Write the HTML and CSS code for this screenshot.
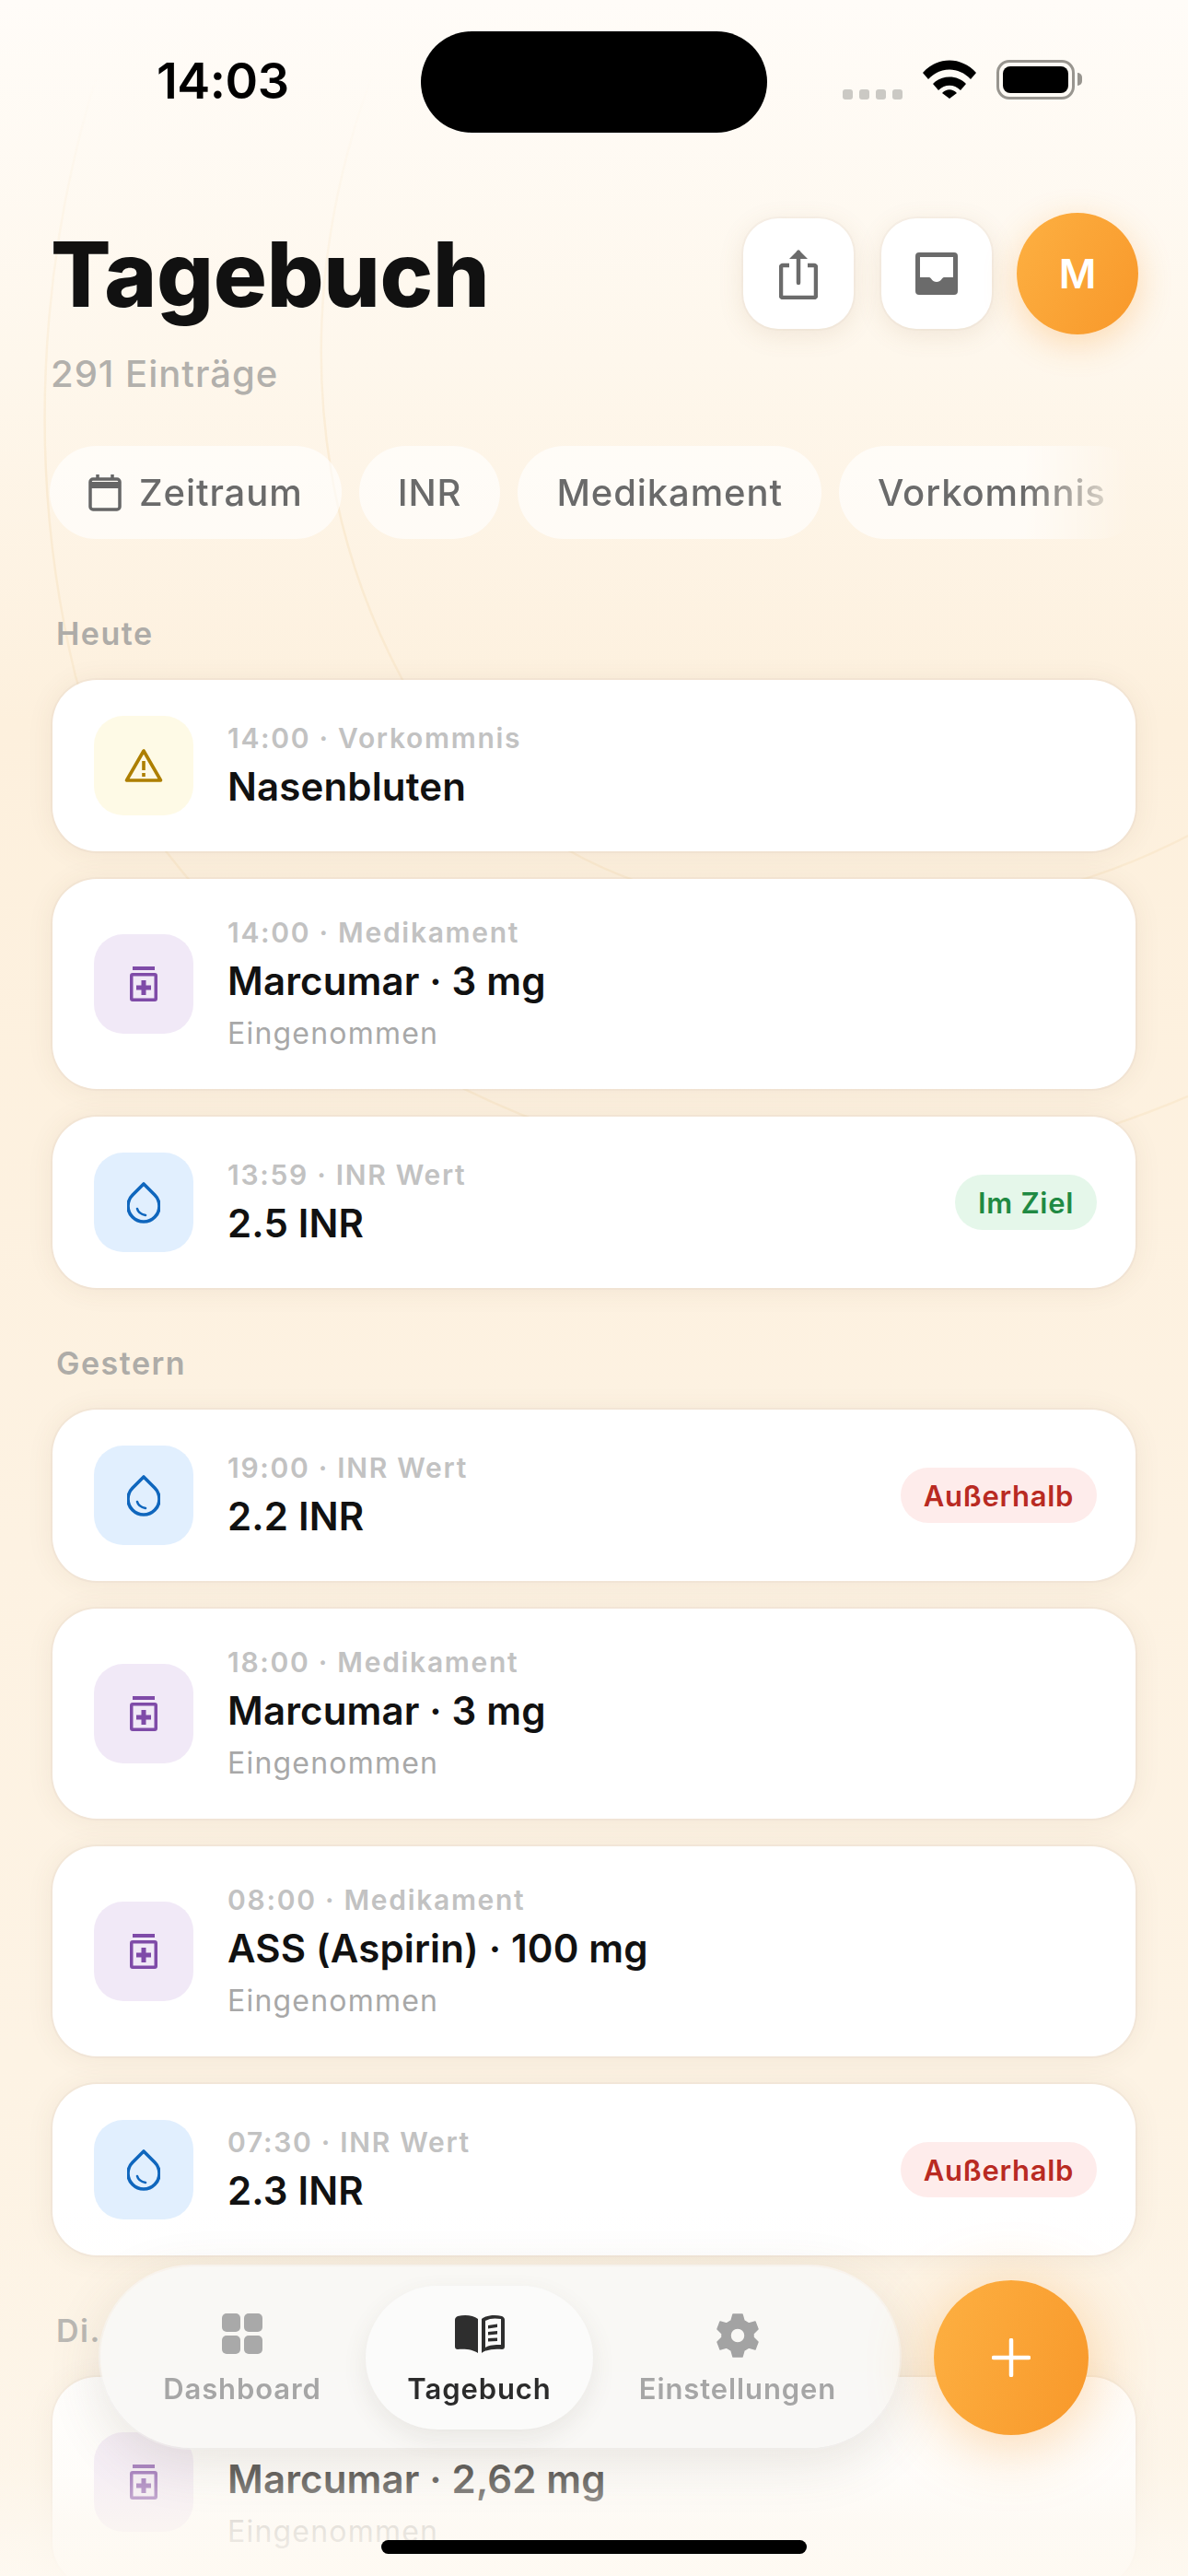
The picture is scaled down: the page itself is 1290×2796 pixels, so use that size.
FILE: index.html
```html
<!DOCTYPE html>
<html lang="de">
<head>
    <meta charset="UTF-8">
    <meta name="viewport" content="width=device-width, initial-scale=1.0">
    <title>Tagebuch</title>
    <link rel="stylesheet" href="styles.css">
</head>
<body>
    <div class="screen">
        <svg class="rings" viewBox="0 0 1290 2796" fill="none">
            <path d="M120 40C60 200 15 460 82 734C170 1040 560 1270 860 1275C1020 1278 1160 1245 1290 1190" />
            <path d="M440 0C340 200 300 480 436 736C500 860 640 990 900 990C1040 990 1160 975 1290 907" />
        </svg>

        <div class="status-bar">
            <span class="clock">14:03</span>
            <div class="island"></div>
            <div class="status-icons">
                <div class="signal"><i></i><i></i><i></i><i></i></div>
                <svg width="58" height="42" viewBox="0 0 58 42"><path d="M0 14C16-4 42-4 58 14l-6 7C39 7 19 7 6 21z M11 26c9-10 27-10 36 0l-6 7c-7-7-17-7-24 0z M21 36c5-5 11-5 16 0l-8 6z" fill="#000"/></svg>
                <div class="battery"><div class="battery-fill"></div></div>
                <div class="battery-cap"></div>
            </div>
        </div>

        <header class="page-head">
            <div class="head-text">
                <h1>Tagebuch</h1>
                <p>291 Einträge</p>
            </div>
            <div class="head-actions">
                <button class="square-btn">
                    <svg width="42" height="56" viewBox="0 0 42 56" fill="none" stroke="#6b6b6b" stroke-width="4.5"><path d="M11 19H4a2 2 0 0 0-2 2v31a2 2 0 0 0 2 2h34a2 2 0 0 0 2-2V21a2 2 0 0 0-2-2h-7"/><path d="M21 38V5" stroke-linecap="round"/><path d="M11 12 21 2l10 10z" fill="#6b6b6b" stroke="none"/></svg>
                </button>
                <button class="square-btn">
                    <svg width="46" height="46" viewBox="0 0 46 46"><path fill-rule="evenodd" d="M4 0h38a4 4 0 0 1 4 4v38a4 4 0 0 1-4 4H4a4 4 0 0 1-4-4V4a4 4 0 0 1 4-4zM5 5v22h10c2 0 3 5 8 5s6-5 8-5h10V5z" fill="#6b6b6b"/></svg>
                </button>
                <div class="avatar">M</div>
            </div>
        </header>

        <div class="chips">
            <div class="chip">
                <svg width="36" height="40" viewBox="0 0 36 40" fill="none"><rect x="2" y="5" width="32" height="33" rx="3" stroke="#666" stroke-width="3.5"/><path d="M2 8h32v7H2z" fill="#666"/><path d="M10 0v6M26 0v6" stroke="#666" stroke-width="3.5"/></svg>
                Zeitraum
            </div>
            <div class="chip">INR</div>
            <div class="chip">Medikament</div>
            <div class="chip">Vorkommnis</div>
        </div>

        <section class="day">
            <h2>Heute</h2>
            <div class="entry">
                <div class="tile tile-warn">
                    <svg width="42" height="38" viewBox="0 0 42 38" fill="none"><path d="M21 3 2.5 35h37z" stroke="#ad7f00" stroke-width="3.6" stroke-linejoin="round"/><path d="M21 14v10M21 27v4" stroke="#ad7f00" stroke-width="3.6"/></svg>
                </div>
                <div class="entry-text">
                    <div class="meta">14:00 · Vorkommnis</div>
                    <div class="title">Nasenbluten</div>
                </div>
            </div>
            <div class="entry">
                <div class="tile tile-med">
                    <svg width="30" height="38" viewBox="0 0 30 38"><use href="#jar"/></svg>
                </div>
                <div class="entry-text">
                    <div class="meta">14:00 · Medikament</div>
                    <div class="title">Marcumar · 3 mg</div>
                    <div class="note">Eingenommen</div>
                </div>
            </div>
            <div class="entry">
                <div class="tile tile-inr">
                    <svg width="36" height="46" viewBox="0 0 36 46"><use href="#drop"/></svg>
                </div>
                <div class="entry-text">
                    <div class="meta">13:59 · INR Wert</div>
                    <div class="title">2.5 INR</div>
                </div>
                <span class="badge badge-ok">Im Ziel</span>
            </div>
        </section>

        <section class="day">
            <h2>Gestern</h2>
            <div class="entry">
                <div class="tile tile-inr">
                    <svg width="36" height="46" viewBox="0 0 36 46"><use href="#drop"/></svg>
                </div>
                <div class="entry-text">
                    <div class="meta">19:00 · INR Wert</div>
                    <div class="title">2.2 INR</div>
                </div>
                <span class="badge badge-out">Außerhalb</span>
            </div>
            <div class="entry">
                <div class="tile tile-med">
                    <svg width="30" height="38" viewBox="0 0 30 38"><use href="#jar"/></svg>
                </div>
                <div class="entry-text">
                    <div class="meta">18:00 · Medikament</div>
                    <div class="title">Marcumar · 3 mg</div>
                    <div class="note">Eingenommen</div>
                </div>
            </div>
            <div class="entry">
                <div class="tile tile-med">
                    <svg width="30" height="38" viewBox="0 0 30 38"><use href="#jar"/></svg>
                </div>
                <div class="entry-text">
                    <div class="meta">08:00 · Medikament</div>
                    <div class="title">ASS (Aspirin) · 100 mg</div>
                    <div class="note">Eingenommen</div>
                </div>
            </div>
            <div class="entry">
                <div class="tile tile-inr">
                    <svg width="36" height="46" viewBox="0 0 36 46"><use href="#drop"/></svg>
                </div>
                <div class="entry-text">
                    <div class="meta">07:30 · INR Wert</div>
                    <div class="title">2.3 INR</div>
                </div>
                <span class="badge badge-out">Außerhalb</span>
            </div>
        </section>

        <section class="day">
            <h2>Di.</h2>
            <div class="entry">
                <div class="tile tile-med">
                    <svg width="30" height="38" viewBox="0 0 30 38"><use href="#jar"/></svg>
                </div>
                <div class="entry-text">
                    <div class="meta">&nbsp;</div>
                    <div class="title">Marcumar · 2,62 mg</div>
                    <div class="note">Eingenommen</div>
                </div>
            </div>
        </section>

        <div class="bottom-fade"></div>

        <nav class="tab-bar">
            <div class="tab tab-dashboard">
                <svg width="44" height="44" viewBox="0 0 44 44" fill="#a9a9a9"><rect width="20" height="20" rx="5"/><rect x="24" width="20" height="20" rx="5"/><rect y="24" width="20" height="20" rx="5"/><rect x="24" y="24" width="20" height="20" rx="5"/></svg>
                <span>Dashboard</span>
            </div>
            <div class="tab tab-active">
                <svg width="54" height="44" viewBox="0 0 54 44"><path fill-rule="evenodd" d="M25 6v37C20 39 10 38 3 39c-2 0-3-1-3-3V7c0-2 1-3 3-4 8-2 17-1 22 3zM29 6c5-4 14-5 22-3 2 1 3 2 3 4v29c0 2-1 3-3 3-7-1-17 0-22 4zM33 8v29c5-3 10-3 17-3V6c-6-1-12-1-17 2zM36 13l10-1.500v3.500l-10 1.500zM36 20l10-1v3.500l-10 1zM36 27l10-.500v3.500l-10 .500z" fill="#2e2e2e"/></svg>
                <span>Tagebuch</span>
            </div>
            <div class="tab tab-settings">
                <svg width="46" height="48" viewBox="0 0 46 48"><path fill-rule="evenodd" d="M18 1h10l2 7 5 3 7-2 3 8-5 5v4l5 5-3 8-7-2-5 3-2 7H18l-2-7-5-3-7 2-3-8 5-5v-4l-5-5 3-8 7 2 5-3zM23 16a8 8 0 1 0 0 16 8 8 0 0 0 0-16z" fill="#a3a3a3" stroke="#a3a3a3" stroke-width="1.5" stroke-linejoin="round"/></svg>
                <span>Einstellungen</span>
            </div>
        </nav>

        <button class="fab">
            <svg width="42" height="42" viewBox="0 0 42 42" stroke="#fff" stroke-width="4.5" stroke-linecap="round"><path d="M21 2v38M2 21h38"/></svg>
        </button>

        <div class="home-bar"></div>

        <svg width="0" height="0" class="defs">
            <defs>
                <g id="jar" fill="#7f4ba8">
                    <path d="M3 0h24v4H3z"/>
                    <path fill-rule="evenodd" d="M3 7h24a3 3 0 0 1 3 3v25a3 3 0 0 1-3 3H3a3 3 0 0 1-3-3V10a3 3 0 0 1 3-3zm.5 3.500v24h23v-24z"/>
                    <path d="M12.500 15h5v5.500H23v5h-5.500V31h-5v-5.500H7v-5h5.500z"/>
                </g>
                <g id="drop" fill="none" stroke="#0f66bd" stroke-width="3.6" stroke-linejoin="round">
                    <path d="M18 3 30 15a17 17 0 1 1-24 0z"/>
                    <path d="M11 30c1 4 4 6 9 7" stroke-width="2.6" stroke-linecap="round"/>
                </g>
            </defs>
        </svg>
    </div>
</body>
</html>
```

FILE: styles.css
```css
* {
    box-sizing: border-box;
}
body {
    margin: 0;
    font-family: Inter, "Liberation Sans", sans-serif;
    background-color: #fdf3e4;
}
button {
    border: none;
    padding: 0;
    cursor: pointer;
}
.screen {
    position: relative;
    width: 1290px;
    height: 2796px;
    overflow: hidden;
    padding: 0 57px;
    background: linear-gradient(180deg, #fffcf8 0%, #fef7ec 14%, #fdf0dd 28%, #fdf2e2 60%, #fdf4e6 100%);
}
.rings {
    position: absolute;
    top: 0;
    left: 0;
    width: 1290px;
    height: 2796px;
    stroke: #f9e6c8;
    stroke-width: 2.5;
    opacity: 0.6;
    -webkit-mask-image: linear-gradient(180deg, transparent 80px, #000 500px);
    mask-image: linear-gradient(180deg, transparent 80px, #000 500px);
}
.defs {
    position: absolute;
}

.status-bar {
    position: relative;
    display: flex;
    align-items: center;
    height: 144px;
    padding-top: 34px;
}
.clock {
    margin: -3px 0 0 113px;
    width: 287px;
    font-size: 54px;
    font-weight: 600;
    letter-spacing: -0.5px;
    color: #000;
}
.island {
    width: 376px;
    height: 110px;
    border-radius: 55px;
    background-color: #000;
}
.status-icons {
    display: flex;
    align-items: center;
    margin-left: 82px;
    margin-top: -6px;
}
.signal {
    display: flex;
    gap: 7px;
    margin-top: 32px;
    margin-right: 22px;
}
.signal i {
    width: 11px;
    height: 11px;
    border-radius: 3px;
    background-color: #cbc9c4;
}
.battery {
    margin-left: 22px;
    width: 85px;
    height: 43px;
    padding: 4px;
    border: 3px solid #98958f;
    border-radius: 14px;
}
.battery-fill {
    height: 100%;
    border-radius: 8px;
    background-color: #000;
}
.battery-cap {
    width: 5px;
    height: 14px;
    margin-left: 3px;
    border-radius: 0 5px 5px 0;
    background-color: #98958f;
}

.page-head {
    position: relative;
    display: flex;
    justify-content: space-between;
    margin-top: 96px;
}
.head-text h1 {
    margin: 0 0 0 -2px;
    font-size: 97px;
    line-height: 116px;
    font-weight: 800;
    letter-spacing: -0.3px;
    color: #111;
}
.head-text p {
    margin: 26px 0 0 -2px;
    font-size: 40px;
    line-height: 48px;
    font-weight: 500;
    letter-spacing: 1px;
    color: #b2b0ac;
}
.head-actions {
    display: flex;
    align-items: center;
    align-self: flex-start;
    gap: 30px;
    margin: -9px -3px 0 0;
}
.square-btn {
    display: flex;
    align-items: center;
    justify-content: center;
    width: 120px;
    height: 120px;
    border-radius: 38px;
    background-color: #fff;
    box-shadow: 0 6px 28px rgba(150, 110, 60, 0.13), 0 0 0 2px rgba(120, 110, 100, 0.04);
}
.avatar {
    display: flex;
    align-items: center;
    justify-content: center;
    width: 132px;
    height: 132px;
    margin-left: -3px;
    border-radius: 50%;
    font-size: 44px;
    font-weight: 600;
    color: #fff;
    background: linear-gradient(120deg, #fdb042, #f8982a);
    box-shadow: 0 10px 36px rgba(248, 152, 42, 0.3);
}

.chips {
    position: relative;
    display: flex;
    gap: 19px;
    width: 1176px;
    margin: 54px 0 0 -3px;
    overflow: hidden;
    -webkit-mask-image: linear-gradient(90deg, #000 90%, transparent 100%);
    mask-image: linear-gradient(90deg, #000 90%, transparent 100%);
}
.chip {
    display: flex;
    align-items: center;
    flex-shrink: 0;
    gap: 19px;
    height: 101px;
    padding: 0 42px;
    border-radius: 51px;
    font-size: 40px;
    font-weight: 500;
    letter-spacing: 0.9px;
    color: #6a6a6a;
    background-color: rgba(255, 255, 255, 0.65);
}

.day {
    position: relative;
    margin-top: 62px;
}
.chips + .day {
    margin-top: 83px;
}
.day h2 {
    margin: 0 0 30px 4px;
    font-size: 34px;
    line-height: 40px;
    font-weight: 600;
    letter-spacing: 1.5px;
    color: #aeaca8;
}
.entry {
    display: flex;
    align-items: center;
    gap: 37px;
    min-height: 186px;
    margin-bottom: 30px;
    padding: 0 42px 0 45px;
    border-radius: 48px;
    background-color: #fff;
    box-shadow: 0 2px 30px rgba(100, 80, 50, 0.08), 0 0 0 2px rgba(130, 120, 110, 0.05);
}
.entry:last-child {
    margin-bottom: 0;
}
.tile {
    display: flex;
    align-items: center;
    justify-content: center;
    flex-shrink: 0;
    width: 108px;
    height: 108px;
    border-radius: 32px;
}
.tile-warn {
    background-color: #fefae6;
}
.tile-med {
    background-color: #f1e9f7;
}
.tile-inr {
    background-color: #e1effe;
}
.entry-text {
    flex: 1;
    padding: 38px 0 39px;
}
.meta {
    font-size: 30px;
    line-height: 40px;
    font-weight: 600;
    letter-spacing: 1.7px;
    color: #c2c2c2;
}
.title {
    margin-top: 7px;
    font-size: 42px;
    line-height: 52px;
    font-weight: 600;
    letter-spacing: 0.15px;
    color: #111;
}
.note {
    margin-top: 10px;
    font-size: 32px;
    line-height: 42px;
    letter-spacing: 1.2px;
    color: #a8a8a8;
}
.badge {
    display: flex;
    align-items: center;
    height: 60px;
    padding: 0 25px;
    border-radius: 30px;
    font-size: 31px;
    font-weight: 600;
    letter-spacing: 0.7px;
}
.badge-ok {
    color: #1f8a43;
    background-color: #e5f7ea;
}
.badge-out {
    color: #b92a22;
    background-color: #feeceb;
}

.bottom-fade {
    position: absolute;
    left: 0;
    right: 0;
    bottom: 0;
    height: 400px;
    background: linear-gradient(180deg, rgba(253, 248, 240, 0) 0%, rgba(253, 248, 240, 0.35) 72%, rgba(253, 248, 240, 0.72) 86%, rgba(254, 249, 241, 0.92) 100%);
}
.tab-bar {
    position: absolute;
    left: 109px;
    top: 2460px;
    display: flex;
    align-items: center;
    width: 868px;
    height: 197px;
    padding-left: 48px;
    border-radius: 99px;
    background-color: rgba(249, 248, 246, 0.95);
    backdrop-filter: blur(16px);
    box-shadow: 0 16px 60px rgba(90, 80, 60, 0.14), 0 0 0 2px rgba(255, 255, 255, 0.6);
}
.tab {
    display: flex;
    flex: none;
    flex-direction: column;
    align-items: center;
    justify-content: center;
    gap: 19px;
    height: 156px;
    padding-top: 4px;
    font-size: 31px;
    font-weight: 600;
    letter-spacing: 0.9px;
    color: #a6a6a6;
}
.tab-dashboard {
    width: 212px;
    margin-right: 28px;
}
.tab-settings {
    width: 314px;
}
.tab-settings svg {
    margin-bottom: -4px;
}
.tab-active {
    width: 247px;
    border-radius: 78px;
    color: #2b2b2b;
    background-color: #fbfbfa;
    box-shadow: 0 10px 26px rgba(90, 80, 60, 0.1);
}
.fab {
    position: absolute;
    left: 1014px;
    top: 2475px;
    display: flex;
    align-items: center;
    justify-content: center;
    width: 168px;
    height: 168px;
    border-radius: 50%;
    background: linear-gradient(110deg, #fdb042, #f8982a);
    box-shadow: 0 10px 70px rgba(248, 152, 42, 0.4);
}
.home-bar {
    position: absolute;
    left: 414px;
    top: 2757px;
    width: 462px;
    height: 15px;
    border-radius: 8px;
    background-color: #000;
}
```
